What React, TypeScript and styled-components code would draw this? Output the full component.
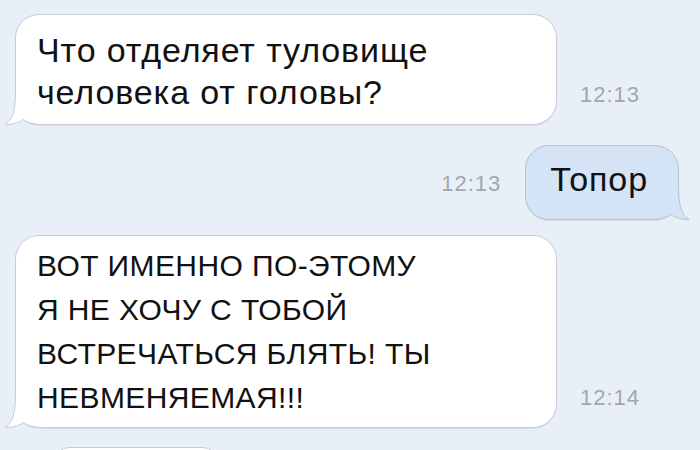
import React from 'react'
import styled, { createGlobalStyle } from 'styled-components'

const GlobalStyle = createGlobalStyle`
  html, body {
    margin: 0;
    padding: 0;
    background: #e9eff7;
    overflow: hidden;
  }
  body {
    font-family: "Liberation Sans", Arial, Helvetica, sans-serif;
  }
`

const Thread = styled.div`
  width: 700px;
  height: 450px;
  overflow: hidden;
  display: flex;
  flex-direction: column;
  padding-top: 14px;
  box-sizing: border-box;
`

const Row = styled.div<{ $out?: boolean; $top: number }>`
  display: flex;
  flex-direction: row;
  justify-content: ${(p) => (p.$out ? 'flex-end' : 'flex-start')};
  align-items: ${(p) => (p.$out ? 'center' : 'flex-end')};
  margin-top: ${(p) => p.$top}px;
  padding: ${(p) => (p.$out ? '0 21px 0 0' : '0 0 0 15px')};
  flex-shrink: 0;
`

// caps-only message is set smaller and looser than the lowercase ones
const Bubble = styled.div<{ $out?: boolean; $caps?: boolean }>`
  position: relative;
  box-sizing: border-box;
  width: ${(p) => (p.$out ? 'auto' : '542px')};
  padding: ${(p) => (p.$out ? '12px 30px 19px 24px' : p.$caps ? '8px 20px 7px 21px' : '14px 20px 11px 21px')};
  background: ${(p) => (p.$out ? '#d4e3f6' : '#ffffff')};
  border: 1px solid ${(p) => (p.$out ? '#b3c3d8' : '#c8ccd3')};
  border-radius: 24px;
  color: #111111;
  font-size: ${(p) => (p.$caps ? '30px' : '34px')};
  line-height: ${(p) => (p.$caps ? '44px' : '42px')};
  letter-spacing: ${(p) => (p.$caps ? '0.4px' : '0.9px')};
  white-space: nowrap;
  box-shadow: 0 1px 0 rgba(160, 170, 185, 0.25);
`

const Tail = styled.svg<{ $out?: boolean }>`
  position: absolute;
  bottom: -1px;
  width: 40px;
  height: 36px;
  ${(p) => (p.$out ? 'right: -12px; transform: scaleX(-1);' : 'left: -12px;')}
`

const Time = styled.div<{ $out?: boolean }>`
  font-size: 22px;
  line-height: 22px;
  letter-spacing: 1px;
  color: #a2a7ae;
  margin: ${(p) => (p.$out ? '3px 24px 0 0' : '0 0 19px 23px')};
`

const Peek = styled.div`
  margin-left: 40px;
  width: 160px;
  height: 40px;
  background: #ffffff;
  border: 1px solid #c8ccd3;
  border-radius: 14px;
  flex-shrink: 0;
`

interface Msg {
  out?: boolean
  caps?: boolean
  lines: string[]
  time: string
  top: number
}

const messages: Msg[] = [
  { lines: ['Что отделяет туловище', 'человека от головы?'], time: '12:13', top: 0 },
  { out: true, lines: ['Топор'], time: '12:13', top: 20 },
  {
    caps: true,
    lines: ['ВОТ ИМЕННО ПО-ЭТОМУ', 'Я НЕ ХОЧУ С ТОБОЙ', 'ВСТРЕЧАТЬСЯ БЛЯТЬ! ТЫ', 'НЕВМЕНЯЕМАЯ!!!'],
    time: '12:14',
    top: 15,
  },
]

const tailPath = 'M11.5 0 C11.5 24 8 31 1 35.3 C8 35.8 15 33.5 19.5 30.5 C24 34 30 35.5 40 35.5'

// fill only hides the rounded corner, staying clear of the text
const BubbleTail: React.FC<{ out?: boolean }> = ({ out }) => {
  const fill = out ? '#d4e3f6' : '#ffffff'
  const stroke = out ? '#b3c3d8' : '#c8ccd3'
  return (
    <Tail $out={out} viewBox="0 0 40 36">
      <path d={`${tailPath} L40 26 L30 26 L30 0 Z`} fill={fill} />
      <path d={tailPath} fill="none" stroke={stroke} strokeWidth="1" />
    </Tail>
  )
}

const Message: React.FC<{ msg: Msg }> = ({ msg }) => (
  <Row $out={msg.out} $top={msg.top}>
    {msg.out && <Time $out>{msg.time}</Time>}
    <Bubble $out={msg.out} $caps={msg.caps}>
      <BubbleTail out={msg.out} />
      {msg.lines.map((l, i) => (
        <React.Fragment key={i}>
          {i > 0 && <br />}
          {l}
        </React.Fragment>
      ))}
    </Bubble>
    {!msg.out && <Time>{msg.time}</Time>}
  </Row>
)

export default function App() {
  return (
    <>
      <GlobalStyle />
      <Thread>
        {messages.map((m, i) => (
          <Message key={i} msg={m} />
        ))}
        <Row $top={19}>
          <Peek />
        </Row>
      </Thread>
    </>
  )
}
